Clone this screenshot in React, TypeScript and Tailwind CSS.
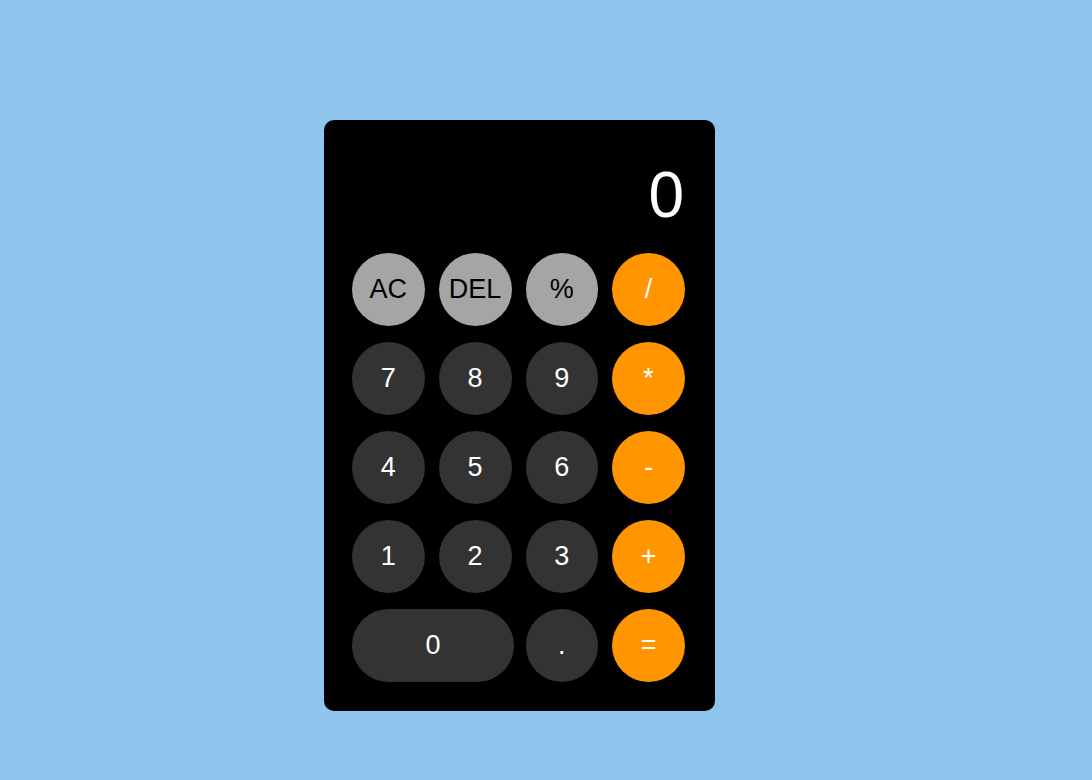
import { useState } from "react";

type Key = {
  label: string;
  kind: "fn" | "num" | "op";
  wide?: boolean;
};

const keys: Key[] = [
  { label: "AC", kind: "fn" },
  { label: "DEL", kind: "fn" },
  { label: "%", kind: "fn" },
  { label: "/", kind: "op" },
  { label: "7", kind: "num" },
  { label: "8", kind: "num" },
  { label: "9", kind: "num" },
  { label: "*", kind: "op" },
  { label: "4", kind: "num" },
  { label: "5", kind: "num" },
  { label: "6", kind: "num" },
  { label: "-", kind: "op" },
  { label: "1", kind: "num" },
  { label: "2", kind: "num" },
  { label: "3", kind: "num" },
  { label: "+", kind: "op" },
  { label: "0", kind: "num", wide: true },
  { label: ".", kind: "num" },
  { label: "=", kind: "op" },
];

const kindClass = {
  fn: "bg-[#a5a5a5] text-black",
  num: "bg-[#333333] text-white",
  op: "bg-[#ff9500] text-white",
};

export default function App() {
  const [display, setDisplay] = useState("0");

  const press = (label: string) => {
    if (label === "AC") return setDisplay("0");
    if (label === "DEL") return setDisplay(display.length > 1 ? display.slice(0, -1) : "0");
    if (label === "=") {
      try {
        // quick and dirty eval of the expression
        const result = Function(`"use strict"; return (${display})`)();
        setDisplay(String(result));
      } catch {
        setDisplay("Error");
      }
      return;
    }
    setDisplay(display === "0" && label !== "." ? label : display + label);
  };

  return (
    <div className="min-h-[780px] w-full bg-[#8dc5ec] pt-[120px] font-['Liberation_Sans',Arial,sans-serif]">
      <div className="ml-[324px] w-[391px] rounded-[10px] bg-black pt-7 pb-[29px] pl-7 pr-[30px]">
        <div className="mb-[20px] flex h-[85px] items-end justify-end pr-[1px]">
          <span className="text-[64px] leading-[1.15] text-white">{display}</span>
        </div>
        <div className="grid w-[333px] grid-cols-4 gap-x-[14px] gap-y-[16px]">
          {keys.map((k) => (
            <button
              key={k.label}
              onClick={() => press(k.label)}
              className={`flex h-[73px] items-center justify-center rounded-full text-[27px] ${kindClass[k.kind]} ${k.wide ? "col-span-2 w-[162px]" : ""}`}
            >
              {k.label}
            </button>
          ))}
        </div>
      </div>
    </div>
  );
}
